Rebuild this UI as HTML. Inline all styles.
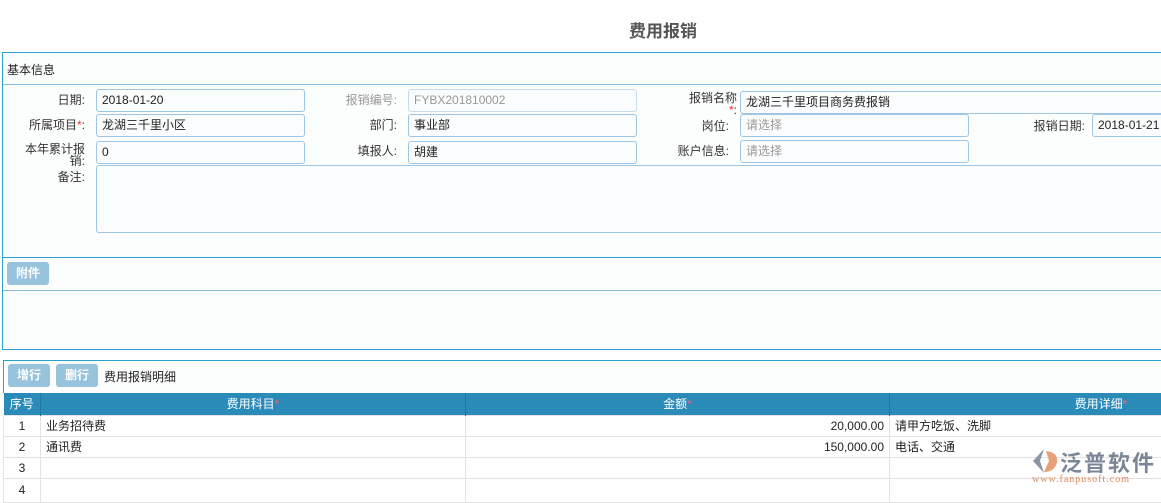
<!DOCTYPE html>
<html><head><meta charset="utf-8"><style>
*{box-sizing:border-box;margin:0;padding:0}
body{width:1161px;height:493px;overflow:hidden;background:#fff;font-family:"Liberation Sans","Noto Sans CJK SC",sans-serif;font-size:12px;color:#222;position:relative}
.a{position:absolute}
.title{left:0;width:1326px;text-align:center;top:17px;font-size:17px;font-weight:bold;color:#555}
.p1{left:2px;top:52px;width:1170px;height:298px;border:1px solid #2a9fd0;border-right:none;background:#fcfdfd}
.lbl{text-align:right;width:80px;color:#333;line-height:14px}
.in{border:1px solid #9cc6e4;border-radius:3px;background:#fbfcfd;height:23px;padding-left:5px;line-height:21px;color:#222}
.ph{color:#999}
.btn{background:#97c3dc;color:#fff;border-radius:3px;height:23px;line-height:23px;text-align:center;font-weight:bold}
.red{color:#e33}
.p2{left:3px;top:360px;width:1170px;height:140px;border:1px solid #2a9fd0;border-right:none;background:#fcfdfd}
table{border-collapse:collapse;position:absolute;left:3px;top:393px;width:1310px;background:#fff}
th{background:#2a8bb9;color:#fff;font-weight:normal;height:22px;border-right:1px solid #1f78a3}
td{height:21px;border:1px solid #e2e2e2;padding:0 5px}
</style></head><body>
<div class="a title">费用报销</div>
<div class="a p1"></div>
<div class="a" style="left:7px;top:61px">基本信息</div>
<div class="a" style="left:3px;top:84px;width:1158px;border-top:1px solid #88bfe0"></div>

<div class="a lbl" style="left:5px;top:93px">日期:</div>
<div class="a in" style="left:96px;top:89px;width:209px">2018-01-20</div>
<div class="a lbl" style="left:5px;top:118px">所属项目<span class="red">*</span>:</div>
<div class="a in" style="left:96px;top:114px;width:209px">龙湖三千里小区</div>
<div class="a lbl" style="left:5px;top:143px;line-height:12px">本年累计报<br>销:</div>
<div class="a in" style="left:96px;top:141px;width:209px">0</div>
<div class="a lbl" style="left:5px;top:170px">备注:</div>
<div class="a in" style="left:96px;top:165px;width:1070px;height:68px"></div>

<div class="a lbl" style="left:317px;top:93px;color:#999">报销编号:</div>
<div class="a in" style="left:408px;top:89px;width:229px;color:#999;border-color:#c7dcea">FYBX201810002</div>
<div class="a lbl" style="left:317px;top:118px">部门:</div>
<div class="a in" style="left:408px;top:114px;width:229px">事业部</div>
<div class="a lbl" style="left:317px;top:144px">填报人:</div>
<div class="a in" style="left:408px;top:141px;width:229px">胡建</div>

<div class="a lbl" style="left:657px;top:92px;line-height:12px">报销名称<br><span class="red">*</span>:</div>
<div class="a in" style="left:740px;top:91px;width:430px">龙湖三千里项目商务费报销</div>
<div class="a lbl" style="left:649px;top:119px">岗位:</div>
<div class="a in ph" style="left:740px;top:114px;width:229px">请选择</div>
<div class="a lbl" style="left:649px;top:144px">账户信息:</div>
<div class="a in ph" style="left:740px;top:140px;width:229px">请选择</div>
<div class="a lbl" style="left:1005px;top:119px">报销日期:</div>
<div class="a in" style="left:1092px;top:114px;width:80px">2018-01-21</div>

<div class="a" style="left:3px;top:257px;width:1158px;border-top:1px solid #2a9fd0"></div>
<div class="a btn" style="left:7px;top:262px;width:42px">附件</div>
<div class="a" style="left:3px;top:290px;width:1158px;border-top:1px solid #88bfe0"></div>

<div class="a p2"></div>
<div class="a btn" style="left:8px;top:364px;width:42px">增行</div>
<div class="a btn" style="left:56px;top:364px;width:42px">删行</div>
<div class="a" style="left:104px;top:368px">费用报销明细</div>
<table>
<tr><th style="width:37px">序号</th><th style="width:425px">费用科目<span style="color:#ff5a7a">*</span></th><th style="width:424px">金额<span style="color:#ff5a7a">*</span></th><th>费用详细<span style="color:#ff5a7a">*</span></th></tr>
<tr><td style="text-align:center">1</td><td>业务招待费</td><td style="text-align:right">20,000.00</td><td>请甲方吃饭、洗脚</td></tr>
<tr><td style="text-align:center">2</td><td>通讯费</td><td style="text-align:right">150,000.00</td><td>电话、交通</td></tr>
<tr><td style="text-align:center">3</td><td></td><td></td><td></td></tr>
<tr><td style="text-align:center;height:24px">4</td><td></td><td></td><td></td></tr>
</table>
<svg class="a" style="left:1030px;top:448px" width="30" height="26" viewBox="0 0 30 26"><path d="M14 1 L3 13 L14 25 L10 13 Z" fill="#8a96a8"/><path d="M16 3 Q28 4 27 14 Q25 24 14 24 L19 13 Z" fill="#e8a07a"/></svg>
<div class="a" style="left:1060px;top:446px;font-size:22px;color:#7b8798;font-weight:bold;letter-spacing:2px">泛普软件</div>
<div class="a" style="left:1032px;top:474px;font-size:10px;color:#e08a5a;font-family:'Liberation Serif',serif;letter-spacing:1px">www.fanpusoft.com</div>
</body></html>
